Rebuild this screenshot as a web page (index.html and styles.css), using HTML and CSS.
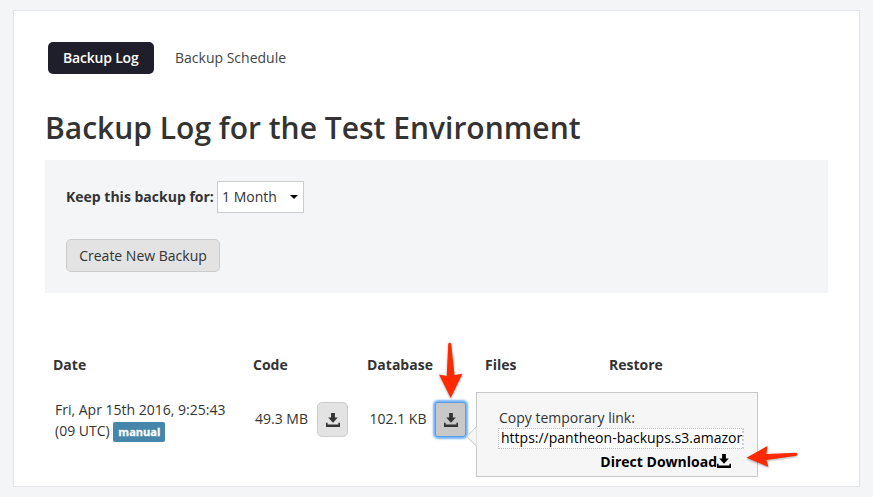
FILE: index.html
```html
<!DOCTYPE html>
<html lang="en">
<head>
<meta charset="utf-8">
<title>Backup Log</title>
<link rel="stylesheet" href="styles.css">
</head>
<body>
<svg class="defs" width="0" height="0" aria-hidden="true">
  <symbol id="download" viewBox="0 0 14 14">
    <path d="M5.100 0h3.800v4.600H11.800L7 9.800 2.200 4.600h2.900zM0 9.800h1.600v1.600h10.800V9.800H14V14H0z"/>
  </symbol>
</svg>
<main class="card">
  <nav class="tabs">
    <a class="tab active">Backup Log</a>
    <a class="tab">Backup Schedule</a>
  </nav>
  <h1 class="title">Backup Log for the Test Environment</h1>
  <section class="panel">
    <div class="field">
      <span class="label">Keep this backup for:</span>
      <div class="select"><span>1 Month</span><i class="caret"></i></div>
    </div>
    <button class="btn create">Create New Backup</button>
  </section>
  <section class="table">
    <div class="row head">
      <span>Date</span><span>Code</span><span>Database</span><span>Files</span><span>Restore</span>
    </div>
    <div class="row entry">
      <div class="date">Fri, Apr 15th 2016, 9:25:43<br>(09 UTC) <span class="badge">manual</span></div>
      <div class="cell code"><span class="size">49.3 MB</span><button class="btn icon-btn"><svg class="icon"><use href="#download"/></svg></button></div>
      <div class="cell database"><span class="size">102.1 KB</span><button class="btn icon-btn pressed"><svg class="icon"><use href="#download"/></svg></button>
        <svg class="arrow-down" viewBox="0 0 30 58"><path d="M13.300 2.500Q14.700 1 16.200 2.500L19.500 34 27.400 32.700 15.700 57 4 33.500 11.700 35z"/></svg>
        <div class="popover">
          <div class="copy">Copy temporary link:</div>
          <div class="link">https://pantheon-backups.s3.amazonaws.com</div>
          <div class="direct">Direct Download<svg class="icon"><use href="#download"/></svg></div>
          <svg class="arrow-left" viewBox="0 0 54 26"><path d="M1.500 12.700L22.400 1 21.400 9 51.500 7.800Q53 9.300 51.500 10.800L21.400 15 23.500 22z"/></svg>
        </div>
      </div>
    </div>
  </section>
</main>
</body>
</html>
```
FILE: styles.css
```css
* { box-sizing: border-box; }
body {
  margin: 0;
  padding: 10px 13px;
  height: 497px;
  overflow: hidden;
  background: #f4f5f7;
  color: #333;
  font: 14px/21px "Open Sans", sans-serif;
}
.defs { position: absolute; }
.card {
  width: 847px;
  height: 477px;
  padding: 31px;
  background: #fff;
  border: 1px solid #e3e4e5;
}
.tabs { display: flex; gap: 6px; margin-left: 3px; }
.tab { height: 32px; padding: 0 15px; line-height: 32px; color: #444; }
.active {
  width: 106px;
  background: #1f1e2b;
  border-radius: 5px;
  color: #fff;
  font-weight: 600;
  letter-spacing: -.2px;
  white-space: nowrap;
}
.title { margin: 33px 0 12px; font-size: 30px; line-height: 41px; font-weight: 600; }
.panel { height: 133px; padding: 21px; background: #f4f5f7; }
.field { display: flex; align-items: center; height: 32px; gap: 3px; }
.label { width: 148px; padding-bottom: 2px; font-weight: 700; white-space: nowrap; }
.select {
  display: flex;
  align-items: center;
  justify-content: space-between;
  width: 87px;
  height: 32px;
  padding: 0 5px 1px 4px;
  background: #fff;
  border: 1px solid #ccc;
}
.caret { border: 4px solid transparent; border-top-color: #000; border-bottom: 0; }
.btn {
  padding: 0;
  background: #e3e3e3;
  border: 1px solid #ccc;
  border-radius: 5px;
  color: #333;
  font: inherit;
}
.create { display: block; width: 154px; height: 33px; margin-top: 26px; }
.table { margin-top: 61px; }
.row { display: grid; grid-template-columns: 200px 114px 118px 124px auto; padding-left: 8px; }
.head { font-weight: 700; }
.entry { margin-top: 24px; }
.date { padding-left: 2px; white-space: nowrap; }
.badge {
  display: inline-block;
  width: 52px;
  height: 20px;
  border-radius: 2px;
  background: #4686aa;
  color: #fff;
  font-size: 11px;
  font-weight: 700;
  -webkit-text-stroke: .3px #fff;
  line-height: 20px;
  text-align: center;
  vertical-align: middle;
}
.cell { position: relative; display: flex; height: 35px; margin-top: 3px; align-items: center; }
.size { padding-bottom: 2px; white-space: nowrap; }
.code .size { width: 64px; padding-left: 2px; }
.database .size { width: 68px; padding-left: 2.500px; }
.icon-btn { display: flex; flex: none; align-items: center; justify-content: center; width: 31px; height: 35px; }
.icon { width: 14px; height: 14px; fill: currentColor; }
.pressed { background: #c8c8c8; border-color: #5b9ee5; border-radius: 3px; box-shadow: 0 0 2px 2px #76b4f8; }
.arrow-down {
  position: absolute;
  left: 68px;
  top: -61px;
  width: 30px;
  height: 58px;
  fill: #ff2a00;
  filter: drop-shadow(0 1px 1px #0005);
}
.popover {
  position: absolute;
  left: 109px;
  top: -10px;
  width: 282px;
  height: 85px;
  padding: 14px 13px 0 21px;
  background: #f6f6f6;
  border: 1px solid #c8c8c8;
}
.popover::before {
  content: "";
  position: absolute;
  left: -8px;
  top: 36px;
  width: 14px;
  height: 14px;
  background: #f6f6f6;
  border: 1px solid #c8c8c8;
  border-top: 0;
  border-right: 0;
  transform: rotate(45deg);
  clip-path: polygon(0 0, 100% 100%, 0 100%);
}
.copy { padding-left: 1px; }
.link {
  width: 246px;
  height: 21px;
  padding-left: 2px;
  border: 1px dotted #bbb;
  border-right: 2px dotted #ccc;
  background: #fff;
  color: #000;
  line-height: 17px;
  white-space: nowrap;
  overflow: hidden;
}
.direct {
  display: flex;
  align-items: center;
  justify-content: flex-end;
  margin: 2px 13px 0 0;
  color: #000;
  font-weight: 700;
}
.direct .icon { margin-top: -1px; }
.arrow-left {
  position: absolute;
  left: 268px;
  top: 52px;
  width: 54px;
  height: 26px;
  fill: #ff2a00;
  filter: drop-shadow(0 1px 1px #0005);
}
```
